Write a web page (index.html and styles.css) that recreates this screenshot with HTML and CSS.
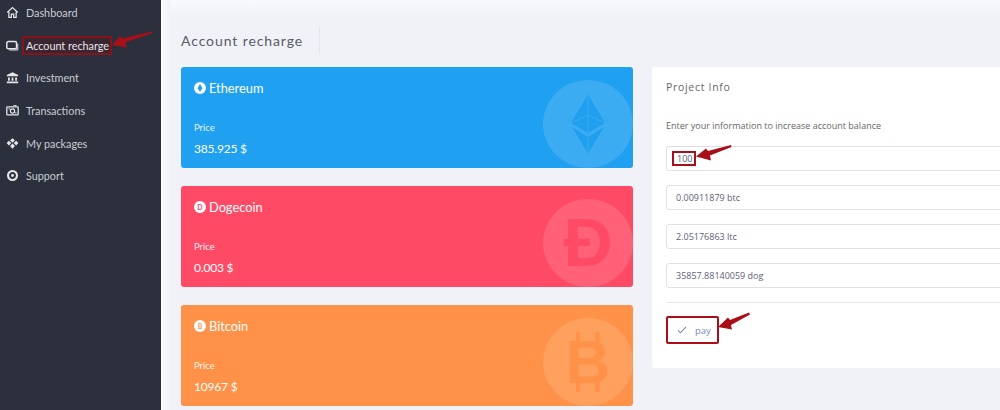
FILE: index.html
```html
<!DOCTYPE html>
<html lang="en">
<head>
    <meta charset="UTF-8">
    <meta name="viewport" content="width=device-width, initial-scale=1.0">
    <title>Account recharge</title>
    <link rel="stylesheet" href="styles.css">
</head>
<body>
    <!-- Sidebar -->
    <aside class="sidebar">
        <a class="nav-item">
            <svg class="nav-icon" viewBox="0 0 16 16"><path d="M1.500 8 8 2l6.500 6M3.500 7v7h3v-4h3v4h3V7" fill="none" stroke="#e4e6ea" stroke-width="1.500"/></svg>
            <span>Dashboard</span>
        </a>
        <a class="nav-item">
            <svg class="nav-icon" viewBox="0 0 16 16"><rect x="1" y="3" width="12" height="9" rx="2" fill="none" stroke="#e4e6ea" stroke-width="1.800"/><path d="M4 13.500h10.500V6" fill="none" stroke="#e4e6ea" stroke-width="1.200"/></svg>
            <span class="mark">Account recharge</span>
        </a>
        <a class="nav-item">
            <svg class="nav-icon" viewBox="0 0 16 16"><path d="M8 1.500 15 5v1.500H1V5z" fill="#e4e6ea"/><path d="M2.500 8h2.200v4H2.500zM6.900 8h2.200v4H6.900zM11.300 8h2.200v4h-2.200zM1 13h14v2H1z" fill="#e4e6ea"/></svg>
            <span>Investment</span>
        </a>
        <a class="nav-item">
            <svg class="nav-icon" viewBox="0 0 16 16"><rect x="1" y="3.500" width="14" height="10" rx="1" fill="none" stroke="#e4e6ea" stroke-width="1.600"/><circle cx="8" cy="8.500" r="2.600" fill="none" stroke="#e4e6ea" stroke-width="1.500"/><path d="M3 6h2M11 11h2M9 2h4" stroke="#e4e6ea" stroke-width="1.200"/></svg>
            <span>Transactions</span>
        </a>
        <a class="nav-item">
            <svg class="nav-icon" viewBox="0 0 16 16"><path d="m8 1.500 3 2.500-3 3-3-3zM3.500 4.500l3 3-3 3L.8 7.500zM12.500 4.500l2.700 3-2.700 3-3-3zM8 8l3 3-3 3.500L5 11z" fill="#e4e6ea"/></svg>
            <span>My packages</span>
        </a>
        <a class="nav-item">
            <svg class="nav-icon" viewBox="0 0 16 16"><circle cx="8" cy="8" r="5.500" fill="none" stroke="#e4e6ea" stroke-width="2.600"/><circle cx="8" cy="8" r="1.800" fill="#e4e6ea"/></svg>
            <span>Support</span>
        </a>
    </aside>

    <main class="content">
        <div class="page-title">
            <h1>Account recharge</h1>
        </div>

        <div class="columns">
            <!-- Coin cards -->
            <div class="cards">
                <div class="card card-eth">
                    <h3><span class="coin-dot"><svg viewBox="0 0 10 10"><path d="M5 1 7.500 5.200 5 8.800 2.500 5.200z" fill="#1fa0f0"/></svg></span>Ethereum</h3>
                    <p class="price-label">Price</p>
                    <p class="price">385.925 $</p>
                    <div class="coin-bg">
                        <svg class="eth-logo" viewBox="0 0 36 60">
                            <path d="M18 0 35 29 18 39 1 29z" fill="#1f9fee"/>
                            <path d="M18 43 34 33 18 60 2 33z" fill="#1f9fee"/>
                            <path d="M18 0V60M1 29 18 21 35 29" fill="none" stroke="#3aa9f2" stroke-width="1"/>
                        </svg>
                    </div>
                </div>
                <div class="card card-doge">
                    <h3><span class="coin-dot">D</span>Dogecoin</h3>
                    <p class="price-label">Price</p>
                    <p class="price">0.003 $</p>
                    <div class="coin-bg"><span class="coin-letter">Ð</span></div>
                </div>
                <div class="card card-btc">
                    <h3><span class="coin-dot">B</span>Bitcoin</h3>
                    <p class="price-label">Price</p>
                    <p class="price">10967 $</p>
                    <div class="coin-bg"><span class="coin-letter btc-letter">B</span></div>
                </div>
            </div>

            <!-- Project info -->
            <section class="panel">
                <h2>Project Info</h2>
                <p class="panel-text">Enter your information to increase account balance</p>
                <div class="field"><span class="mark-thin">100</span></div>
                <div class="field">0.00911879 btc</div>
                <div class="field">2.05176863 ltc</div>
                <div class="field">35857.88140059 dog</div>
                <hr>
                <button class="pay-btn" type="button">
                    <svg viewBox="0 0 12 10"><path d="M1 5.500 4 8.500 11 1" fill="none" stroke="#7a86b0" stroke-width="1.300"/></svg>
                    pay
                </button>
            </section>
        </div>
    </main>

    <!-- Red arrows drawn over the screenshot -->
    <svg class="arrows" viewBox="0 0 1000 410">
        <path d="M152 31.500 122 38.500 120 36 112 45 127 47.500 125 42.500 152.500 33z" fill="#a80f18"/>
        <path d="M731 145 708 151 706 148.500 696 156.500 711 160.500 710 155.500 731.500 147z" fill="#a80f18"/>
        <path d="M749 312.500 730 320 728 317.500 718 327 732 329.500 731 325 750 314.500z" fill="#a80f18"/>
    </svg>
</body>
</html>
```

FILE: styles.css
```css
* {
    box-sizing: border-box;
}
html, body {
    height: 410px;
    overflow: hidden;
}
body {
    display: flex;
    margin: 0;
    background-color: #f0f2f8;
    color: #555;
    font-family: Lato, "Open Sans", sans-serif;
}
.sidebar {
    width: 161px;
    flex-shrink: 0;
    background-color: #2b303c;
}
.nav-item {
    display: flex;
    align-items: center;
    gap: 7px;
    height: 32.700px;
    padding-left: 6px;
    color: #c9ccd2;
    font-size: 10.800px;
    white-space: nowrap;
    transform: translateY(-4px);
}
.nav-icon {
    width: 13px;
    height: 13px;
    flex-shrink: 0;
}
.mark {
    margin-left: -4px;
    padding: 1px 1px 1px 2px;
    border: 2px solid #84161b;
    color: #e6e7ea;
    background-color: #3a2630;
}
.content {
    flex: 1;
    min-width: 0;
    padding: 27px 0 0 20px;
    background:
        linear-gradient(to right, #fbfbfd, #f0f2f8 9px) no-repeat,
        linear-gradient(to bottom, #f8f9fb, #f0f2f8 16px);
    background-size: 9px 100%, 100% 100%;
}
.page-title {
    width: 139px;
    height: 27px;
    display: flex;
    align-items: center;
    border-right: 1px solid #e4e6ee;
    margin-bottom: 13px;
}
h1 {
    margin: 0;
    font-size: 14px;
    font-weight: 400;
    letter-spacing: 0.900px;
    color: #5a5c66;
}
.columns {
    display: grid;
    grid-template-columns: 452px 370px;
    gap: 19px;
    align-items: start;
}
.cards {
    display: flex;
    flex-direction: column;
    gap: 18px;
}
.card {
    position: relative;
    height: 101px;
    padding: 12.500px 13px 0;
    border-radius: 3px;
    overflow: hidden;
    color: #fff;
}
.card-eth {
    background-color: #1fa0f0;
}
.card-doge {
    background-color: #ff4a65;
}
.card-btc {
    background-color: #ff9248;
}
.card h3 {
    display: flex;
    align-items: center;
    gap: 3px;
    margin: 0;
    height: 16px;
    font-size: 12.800px;
    font-weight: 400;
}
.coin-dot {
    display: flex;
    align-items: center;
    justify-content: center;
    width: 12px;
    height: 12px;
    border-radius: 50%;
    background-color: #fff;
    font-size: 7px;
    font-weight: 700;
}
.coin-dot svg {
    width: 10px;
    height: 10px;
}
.card-doge .coin-dot {
    color: #ff4a65;
}
.card-btc .coin-dot {
    color: #ff9248;
}
.price-label {
    margin: 26px 0 0;
    font-size: 9.500px;
    opacity: 0.9;
}
.price {
    margin: 8px 0 0;
    font-size: 12px;
    letter-spacing: -0.200px;
}
.coin-bg {
    position: absolute;
    left: 362px;
    top: 13px;
    width: 90px;
    height: 88px;
    display: flex;
    align-items: center;
    justify-content: center;
    border-radius: 50%;
    background-color: rgba(255, 255, 255, 0.13);
}
.eth-logo {
    width: 36px;
    height: 60px;
}
.coin-letter {
    font-family: "Liberation Sans", sans-serif;
    font-size: 68px;
    font-weight: 700;
    line-height: 1;
    margin-top: -3px;
}
.card-doge .coin-letter {
    color: #ff4a65;
}
.card-btc .coin-letter {
    color: #ff9248;
}
.btc-letter {
    position: relative;
    margin-top: 0;
    font-size: 62px;
    line-height: 60px;
}
.btc-letter::before {
    content: "";
    position: absolute;
    left: 10px;
    top: 0;
    width: 15px;
    height: 60px;
    border-left: 4px solid #ff9248;
    border-right: 5px solid #ff9248;
    clip-path: polygon(0 0, 100% 0, 100% 18%, 0 18%, 0 82%, 100% 82%, 100% 100%, 0 100%);
}
.panel {
    height: 301px;
    padding: 13px 14px 0;
    border-radius: 3px 0 0 3px;
    background-color: #fff;
}
h2 {
    margin: 0;
    height: 14px;
    font-family: "Open Sans", sans-serif;
    font-size: 10.500px;
    font-weight: 400;
    letter-spacing: 0.700px;
    color: #666;
}
.panel-text {
    margin: 25px 0 13px;
    height: 14px;
    font-family: "Open Sans", sans-serif;
    font-size: 9px;
    line-height: 14px;
    color: #666;
}
.field {
    display: flex;
    align-items: center;
    height: 25px;
    margin-bottom: 14px;
    padding-left: 9px;
    border: 1px solid #dfe1e8;
    border-radius: 3px;
    font-family: "Open Sans", sans-serif;
    font-size: 9px;
    color: #5d6078;
}
.mark-thin {
    margin-left: -4px;
    padding: 0 2px 0 3px;
    border: 2px solid #a80f18;
    line-height: 11px;
}
hr {
    margin: 0 0 13px;
    border: 0;
    border-top: 1px solid #e4e6ea;
}
.pay-btn {
    display: flex;
    align-items: center;
    gap: 8px;
    width: 53px;
    height: 28px;
    padding: 0 0 0 9px;
    border: 2px solid #a80f18;
    border-radius: 2px;
    background-color: #fff;
    font-family: "Open Sans", sans-serif;
    font-size: 9.500px;
    color: #7a86c0;
}
.pay-btn svg {
    width: 10px;
    height: 8px;
}
.arrows {
    position: absolute;
    left: 0;
    top: 0;
    width: 1000px;
    height: 410px;
    pointer-events: none;
}
```
